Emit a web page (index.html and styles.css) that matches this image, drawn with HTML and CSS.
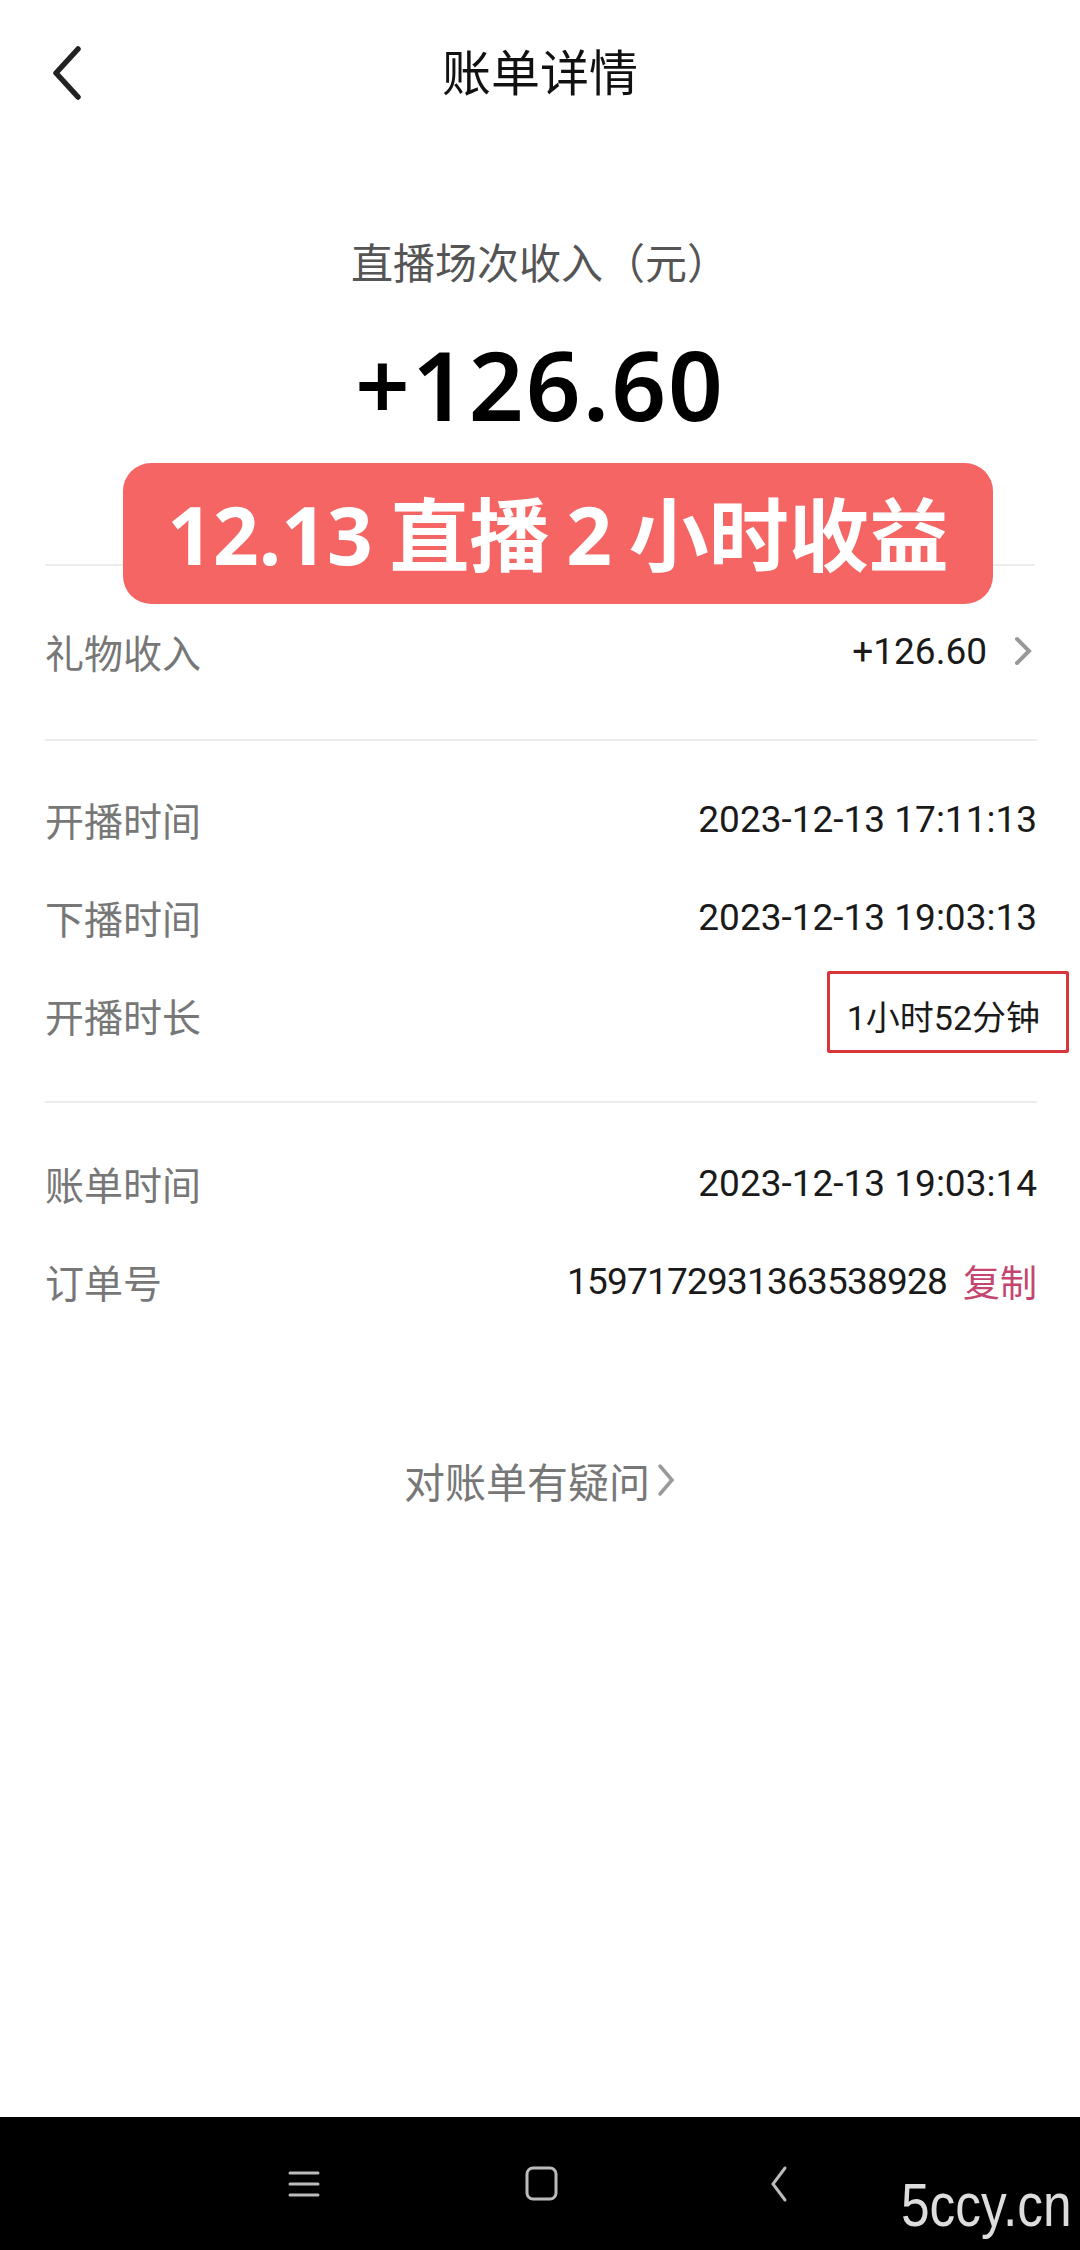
FILE: index.html
```html
<!DOCTYPE html>
<html lang="zh-CN">
<head>
    <meta charset="UTF-8">
    <meta name="viewport" content="width=device-width, initial-scale=1.0">
    <title>账单详情</title>
    <link rel="stylesheet" href="styles.css">
</head>
<body>

<div class="page">
    <header class="topbar">
        <a class="back" href="#">
            <svg width="34" height="54" viewBox="0 0 34 54"><path d="M28 3 L6 27 L28 51" fill="none" stroke="#222" stroke-width="5.5" stroke-linecap="round" stroke-linejoin="round"/></svg>
        </a>
        <h1>账单详情</h1>
        <span></span>
    </header>

    <section class="summary">
        <p class="summary-label">直播场次收入（元）</p>
        <p class="summary-amount">+126.60</p>
        <div class="sticker">12.13 直播 2 小时收益</div>
    </section>

    <section class="group group-gift">
        <div class="row">
            <span class="label">礼物收入</span>
            <span class="value">+126.60
                <svg class="arrow" width="20" height="32" viewBox="0 0 20 32"><path d="M4 4 L16 16 L4 28" fill="none" stroke="#999" stroke-width="4" stroke-linecap="round"/></svg>
            </span>
        </div>
    </section>

    <section class="group group-time">
        <div class="row">
            <span class="label">开播时间</span>
            <span class="value">2023-12-13 17:11:13</span>
        </div>
        <div class="row">
            <span class="label">下播时间</span>
            <span class="value">2023-12-13 19:03:13</span>
        </div>
        <div class="row">
            <span class="label">开播时长</span>
            <span class="value marked">1小时52分钟</span>
        </div>
    </section>

    <section class="group group-order">
        <div class="row">
            <span class="label">账单时间</span>
            <span class="value">2023-12-13 19:03:14</span>
        </div>
        <div class="row">
            <span class="label">订单号</span>
            <span class="value"><span class="order-no">1597172931363538928</span><a class="copy" href="#">复制</a></span>
        </div>
    </section>

    <a class="question" href="#">对账单有疑问
        <svg width="20" height="36" viewBox="0 0 20 36"><path d="M4 4 L16 18 L4 32" fill="none" stroke="#999" stroke-width="3.5" stroke-linecap="round"/></svg>
    </a>

    <footer class="navbar">
        <svg class="nav-menu" width="32" height="28" viewBox="0 0 32 28"><path d="M2 3 H30 M2 14 H30 M2 25 H30" stroke="#bbb" stroke-width="3" stroke-linecap="round"/></svg>
        <svg class="nav-home" width="34" height="36" viewBox="0 0 34 36"><rect x="2" y="2" width="29" height="31" rx="6" fill="none" stroke="#bbb" stroke-width="3"/></svg>
        <svg class="nav-back" width="20" height="38" viewBox="0 0 20 38"><path d="M16 3 L4 19 L16 35" fill="none" stroke="#bbb" stroke-width="3" stroke-linecap="round"/></svg>
        <span class="watermark">5ccy.cn</span>
    </footer>
</div>

</body>
</html>
```

FILE: styles.css
```css
body {
    margin: 0;
    padding: 0;
    background: #fff;
    font-family: Roboto, "Noto Sans CJK SC", sans-serif;
}
p {
    margin: 0;
}
a {
    text-decoration: none;
}
.page {
    position: relative;
    min-height: 2250px;
    display: flex;
    flex-direction: column;
}
.topbar {
    height: 138px;
    display: grid;
    grid-template-columns: 140px 1fr 140px;
    align-items: center;
}
.back {
    display: flex;
    padding-left: 50px;
    padding-top: 8px;
}
.topbar h1 {
    margin: 0;
    text-align: center;
    font-size: 49px;
    font-weight: 400;
    color: #111;
    font-family: "Noto Sans CJK SC", sans-serif;
}
.summary {
    text-align: center;
    padding: 95px 0 120px;
    border-bottom: 2px solid #ececec;
    margin: 0 45px;
}
.summary-label {
    font-size: 42px;
    line-height: 56px;
    color: #555;
    font-family: "Noto Sans CJK SC", sans-serif;
}
.summary-amount {
    margin-top: 35px;
    font-size: 96px;
    line-height: 120px;
    font-weight: 600;
    color: #000;
    font-family: "Noto Sans", sans-serif;
    letter-spacing: 2px;
}
.sticker {
    position: absolute;
    top: 463px;
    left: 123px;
    width: 870px;
    height: 141px;
    border-radius: 28px;
    background: #f46564;
    color: #fff;
    font-family: "Noto Sans", "Noto Sans CJK SC", sans-serif;
    font-weight: 700;
    font-size: 80px;
    line-height: 141px;
    text-align: center;
    white-space: nowrap;
    word-spacing: -4px;
}
.group {
    margin: 0 43px 0 45px;
    border-bottom: 2px solid #ececec;
    display: flex;
    flex-direction: column;
    gap: 42px;
}
.group-gift {
    padding: 57px 0 60px;
}
.group-time {
    padding: 50px 0 58px;
}
.group-order {
    padding: 52px 0 0;
    border-bottom: none;
}
.row {
    display: flex;
    justify-content: space-between;
    align-items: center;
    height: 56px;
}
.label {
    font-family: "Noto Sans CJK SC", sans-serif;
    font-size: 39px;
    color: #777;
}
.value {
    display: flex;
    align-items: center;
    font-size: 37px;
    color: #1a1a1a;
}
.arrow {
    margin-left: 26px;
    margin-right: 4px;
}
.marked {
    position: relative;
    font-size: 34px;
    margin-right: -3px;
}
.marked::after {
    content: "";
    position: absolute;
    left: -20px;
    right: -29px;
    top: -20px;
    bottom: -13px;
    border: 3px solid #d8363a;
    border-radius: 2px;
}
.order-no {
    letter-spacing: -0.8px;
}
.copy {
    margin-left: 16px;
    color: #c4456e;
    font-family: "Noto Sans CJK SC", sans-serif;
    font-size: 37px;
}
.question {
    margin: 143px auto 0;
    display: flex;
    align-items: center;
    gap: 6px;
    height: 56px;
    font-family: "Noto Sans CJK SC", sans-serif;
    font-size: 41px;
    color: #777;
}
.navbar {
    margin-top: auto;
    height: 133px;
    background: #000;
    display: flex;
    align-items: center;
    padding-left: 288px;
    position: relative;
}
.nav-menu {
    margin-right: 205px;
}
.nav-home {
    margin-right: 210px;
}
.watermark {
    position: absolute;
    right: 8px;
    bottom: 10px;
    color: #ddd;
    font-family: "Liberation Sans", sans-serif;
    font-size: 62px;
    transform: scaleX(0.83);
    transform-origin: right;
}
```
